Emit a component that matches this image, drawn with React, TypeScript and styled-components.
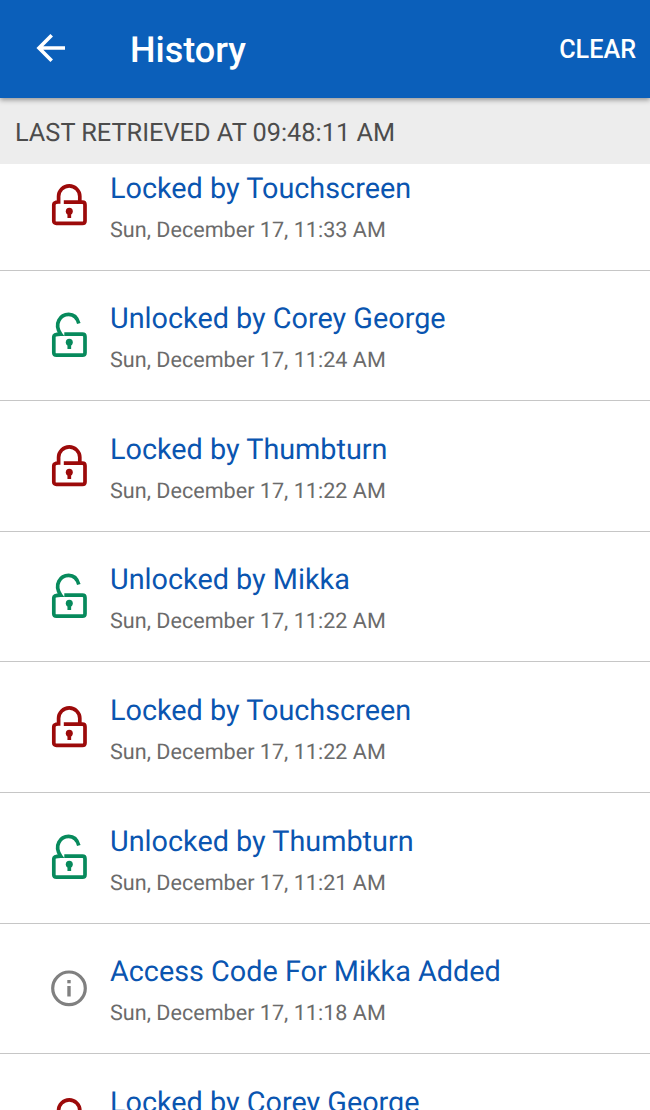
import React from 'react';
import styled, { createGlobalStyle } from 'styled-components';

const GlobalStyle = createGlobalStyle`
  * { box-sizing: border-box; }
  html, body { margin: 0; padding: 0; background: #fff; }
  body { font-family: Roboto, "Liberation Sans", sans-serif; text-rendering: geometricPrecision; }
`;

const Screen = styled.div`
  display: flex;
  flex-direction: column;
  width: 650px;
  height: 1110px;
  overflow: hidden;
  background: #fff;
`;

const AppBar = styled.header`
  display: flex;
  align-items: center;
  flex: 0 0 98px;
  padding: 0 14px 0 36px;
  background: #0b5fba;
  color: #fff;
  box-shadow: 0 2px 5px rgba(0, 0, 0, 0.38);
  z-index: 1;
`;

const BackIcon = styled.svg`
  width: 30px;
  height: 28px;
  margin: 0 64px 2px 0;
`;

const Title = styled.h1`
  flex: 1;
  margin: 1px 0 0;
  font-size: 36px;
  line-height: 40px;
  font-weight: 500;
`;

const ClearButton = styled.button`
  margin-top: 2px;
  padding: 0;
  border: 0;
  background: none;
  color: inherit;
  font: 500 25.2px/30px Roboto, sans-serif;
`;

const SectionHeader = styled.div`
  flex: 0 0 66px;
  padding: 5px 15px 0;
  background: #ededed;
  color: #4c4c4c;
  font-size: 25.3px;
  line-height: 61px;
`;

const List = styled.ul`
  flex: 1;
  min-height: 0;
  margin: 0;
  padding: 0;
  overflow: hidden;
  list-style: none;
`;

const Row = styled.li<{ $first?: boolean }>`
  display: flex;
  height: 130.6px;
  margin-top: ${(p) => (p.$first ? '-24px' : '0')};
  padding-left: 50px;
  border-bottom: 1px solid #c6c6c6;
`;

const StatusIcon = styled.svg`
  flex: none;
  width: 38px;
  height: 46px;
  margin: 41px 22px 0 0;
`;

const Label = styled.div`
  padding-top: 29.7px;
`;

const Event = styled.div`
  color: #0a55b0;
  font-size: 28.8px;
  line-height: 38px;
  white-space: nowrap;
`;

const Time = styled.div`
  margin-top: 8px;
  color: #6b6b6b;
  font-size: 21.6px;
  line-height: 30px;
`;

type Kind = 'locked' | 'unlocked' | 'info';

const Status = ({ kind }: { kind: Kind }) => {
  if (kind === 'info') {
    return (
      <StatusIcon viewBox="0 0 38 46" fill="none" stroke="#808080">
        <circle cx="19" cy="23.3" r="16.3" strokeWidth="3.2" />
        <path d="M19 21V31.5" strokeWidth="3.4" />
        <path d="M19 15V18.3" strokeWidth="3.4" />
      </StatusIcon>
    );
  }
  const color = kind === 'locked' ? '#9c0a0a' : '#078a5c';
  return (
    <StatusIcon viewBox="0 0 38 46" fill="none" stroke={color} strokeWidth="3.7">
      <path
        d={
          kind === 'locked'
            ? 'M13.8 21.2H32.4Q35 21.2 35 23.8V39.9Q35 42.3 32.4 42.3H6.4Q3.8 42.3 3.8 39.9V23.8Q3.8 21 8.6 21V15.3A10.6 10.4 0 0 1 29.8 15.3V21.2'
            : 'M14.3 22.2H32.4Q35 22.2 35 24.8V40.7Q35 43.2 32.4 43.2H6.4Q3.8 43.2 3.8 40.7V24.8Q3.8 22.2 10.8 22.2C3.3 11.5 10.5 2.4 18.7 2.4C24 2.4 27.2 5.7 28.8 11.5'
        }
      />
      <circle cx="19.3" cy="30.3" r="3.5" fill={color} stroke="none" />
      <path d="M19.3 30V37" />
    </StatusIcon>
  );
};

const events: { kind: Kind; title: string; time: string }[] = [
  { kind: 'locked', title: 'Locked by Touchscreen', time: 'Sun, December 17, 11:33 AM' },
  { kind: 'unlocked', title: 'Unlocked by Corey George', time: 'Sun, December 17, 11:24 AM' },
  { kind: 'locked', title: 'Locked by Thumbturn', time: 'Sun, December 17, 11:22 AM' },
  { kind: 'unlocked', title: 'Unlocked by Mikka', time: 'Sun, December 17, 11:22 AM' },
  { kind: 'locked', title: 'Locked by Touchscreen', time: 'Sun, December 17, 11:22 AM' },
  { kind: 'unlocked', title: 'Unlocked by Thumbturn', time: 'Sun, December 17, 11:21 AM' },
  { kind: 'info', title: 'Access Code For Mikka Added', time: 'Sun, December 17, 11:18 AM' },
  { kind: 'locked', title: 'Locked by Corey George', time: 'Sun, December 17, 11:18 AM' },
];

export default function App() {
  return (
    <Screen>
      <GlobalStyle />
      <AppBar>
        <BackIcon viewBox="0 0 30 28" fill="none" stroke="#fff" strokeWidth="3.6">
          <path d="M29 14H3M15.7 1.3L3 14L15.7 26.7" />
        </BackIcon>
        <Title>History</Title>
        <ClearButton>CLEAR</ClearButton>
      </AppBar>
      <SectionHeader>LAST RETRIEVED AT 09:48:11 AM</SectionHeader>
      <List>
        {events.map((e, i) => (
          <Row key={i} $first={i === 0}>
            <Status kind={e.kind} />
            <Label>
              <Event>{e.title}</Event>
              <Time>{e.time}</Time>
            </Label>
          </Row>
        ))}
      </List>
    </Screen>
  );
}
